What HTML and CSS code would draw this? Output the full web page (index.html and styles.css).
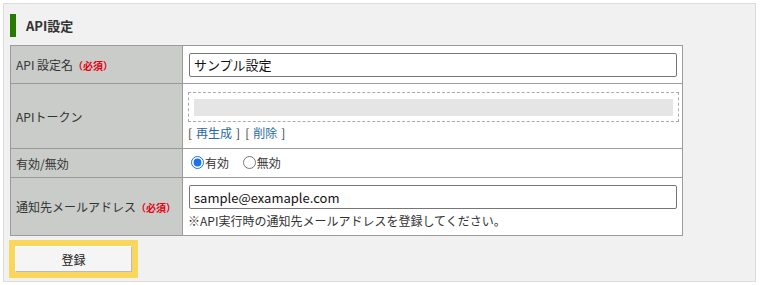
FILE: index.html
```html
<!DOCTYPE html>
<html lang="ja">
<head>
<meta charset="utf-8">
<link rel="stylesheet" href="styles.css">
</head>
<body>
<div class="panel">
  <h2 class="heading">API設定</h2>
  <table class="form">
    <tr class="r1">
      <th>API 設定名<span class="req">（必須）</span></th>
      <td><input class="text" type="text" value="サンプル設定"></td>
    </tr>
    <tr class="r2">
      <th>APIトークン</th>
      <td>
        <div class="token"><div class="token-bar"></div></div>
        <div class="links"><span class="br">[</span><a href="#">再生成</a><span class="br close">]</span><span class="br">[</span><a href="#">削除</a><span class="br close">]</span></div>
      </td>
    </tr>
    <tr class="r3">
      <th>有効/無効</th>
      <td>
        <label class="radio"><input type="radio" name="en" checked>有効</label>
        <label class="radio"><input type="radio" name="en">無効</label>
      </td>
    </tr>
    <tr class="r4">
      <th>通知先メールアドレス<span class="req">（必須）</span></th>
      <td>
        <input class="text" type="text" value="sample@examaple.com">
        <div class="note">※API実行時の通知先メールアドレスを登録してください。</div>
      </td>
    </tr>
  </table>
  <div class="actions">
    <button class="submit" type="button">登録</button>
  </div>
</div>
</body>
</html>
```
FILE: styles.css
```css
* { box-sizing: border-box; }
body {
  margin: 0;
  font-family: "Noto Sans CJK JP", "Noto Sans", sans-serif;
  font-size: 12px;
  color: #333;
}
.panel {
  margin: 3px;
  width: 753px;
  height: 279px;
  border: 1px solid #dcdcdc;
  background: #f0f1f0;
  padding: 10px 6px 0 6px;
}
.heading {
  margin: 0;
  height: 23px;
  border-left: 6px solid #267a00;
  padding-left: 10px;
  font-size: 13px;
  font-weight: bold;
  line-height: 23px;
  color: #333;
}
.form {
  margin-top: 8px;
  width: 673px;
  border-collapse: collapse;
  background: #fff;
}
.form th, .form td {
  border: 1px solid #9a9a9a;
  padding: 0;
  vertical-align: middle;
}
.form th {
  width: 172px;
  background: #c9ccc9;
  text-align: left;
  font-weight: normal;
  padding-left: 5px;
  color: #333;
}
.form td { padding-left: 5px; }
.r1 { height: 38px; }
.r2 { height: 65px; }
.r3 { height: 29px; }
.r4 { height: 58px; }
.req {
  color: #e60012;
  font-weight: bold;
  font-size: 10px;
}
.text {
  display: block;
  width: 488px;
  height: 24px;
  margin-left: 1px;
  border: 1px solid #767676;
  border-radius: 2px;
  padding: 0 4px;
  font-family: inherit;
  font-size: 13px;
  color: #111;
  background: #fff;
}
.token {
  width: 491px;
  height: 30px;
  border: 1px dashed #aaa;
  padding: 6px 5px 0 5px;
}
.token-bar {
  height: 17px;
  background: #e5e5e5;
}
.links {
  display: flex;
  margin-top: 3px;
  font-size: 12px;
  line-height: 16px;
}
.links a { color: #1f6aa5; text-decoration: none; margin: 0 4px; }
.br { color: #333; }
.br.close { margin-right: 5px; }
.radio {
  display: inline-flex;
  align-items: center;
  margin-right: 8px;
  font-size: 12px;
}
.radio input {
  margin: 0 1px 0 3px;
  width: 13px;
  height: 13px;
  accent-color: #1a73e8;
}
.note {
  margin-top: 5px;
  font-size: 12px;
  line-height: 14px;
  color: #333;
}
.actions {
  margin-top: 4px;
  margin-left: -1px;
  width: 129px;
  height: 38px;
  background: #f8d75c;
  padding: 6px 5px 6px 6px;
}
.submit {
  display: block;
  width: 117px;
  height: 26px;
  background: #f4f5f4;
  border: 1px solid #fff;
  border-right-color: #bbb;
  border-bottom-color: #bbb;
  font-family: inherit;
  font-size: 12px;
  color: #222;
  padding: 0;
}
```
